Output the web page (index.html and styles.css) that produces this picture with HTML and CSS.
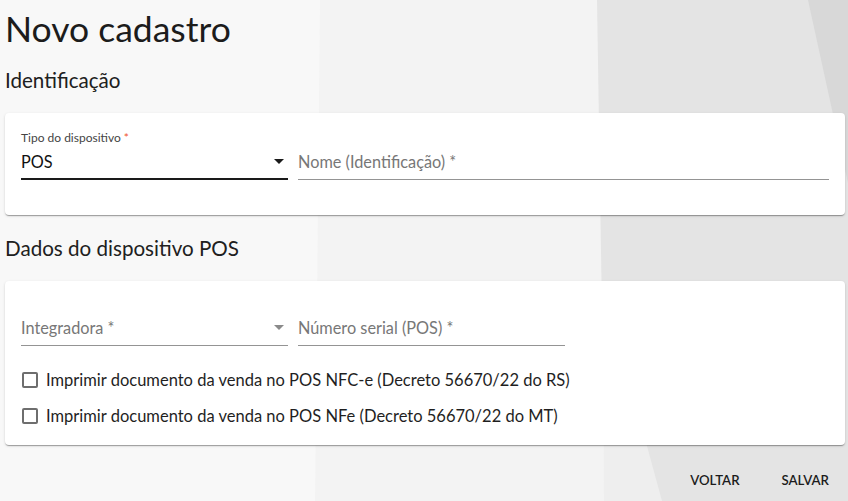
FILE: index.html
```html
<!DOCTYPE html>
<html lang="pt-BR">
<head>
<meta charset="utf-8">
<title>Novo cadastro</title>
<link rel="stylesheet" href="styles.css">
</head>
<body>
<main class="page">
  <h1 class="title">Novo cadastro</h1>

  <h2 class="section">Identificação</h2>
  <section class="card card-ident">
    <div class="row">
      <div class="field field-select">
        <label class="label">Tipo do dispositivo <span class="req">*</span></label>
        <div class="control control-focused">
          <span class="value">POS</span>
          <svg class="arrow" viewBox="0 0 10 5" width="10" height="5"><path d="M0 0h10L5 5z" fill="#1a1a1a"/></svg>
        </div>
      </div>
      <div class="field field-grow">
        <div class="control">
          <span class="placeholder">Nome (Identificação) *</span>
        </div>
      </div>
    </div>
  </section>

  <h2 class="section">Dados do dispositivo POS</h2>
  <section class="card card-pos">
    <div class="row">
      <div class="field field-select">
        <div class="control">
          <span class="placeholder">Integradora *</span>
          <svg class="arrow" viewBox="0 0 10 5" width="10" height="5"><path d="M0 0h10L5 5z" fill="#8a8a8a"/></svg>
        </div>
      </div>
      <div class="field field-select">
        <div class="control">
          <span class="placeholder">Número serial (POS) *</span>
        </div>
      </div>
    </div>
    <label class="check"><span class="box"></span><span>Imprimir documento da venda no POS NFC-e (Decreto 56670/22 do RS)</span></label>
    <label class="check"><span class="box"></span><span>Imprimir documento da venda no POS NFe (Decreto 56670/22 do MT)</span></label>
  </section>

  <div class="actions">
    <button class="btn">VOLTAR</button>
    <button class="btn">SALVAR</button>
  </div>
</main>
</body>
</html>
```

FILE: styles.css
```css
html, body {
  margin: 0;
  padding: 0;
}

body {
  width: 848px;
  height: 501px;
  overflow: hidden;
  font-family: "Lato", "Liberation Sans", sans-serif;
  color: #1f1f1f;
  background-color: #f8f8f8;
  background-image: url("data:image/svg+xml,%3Csvg xmlns='http://www.w3.org/2000/svg' viewBox='0 0 848 501' preserveAspectRatio='none'%3E%3Crect width='848' height='501' fill='%23f8f8f8'/%3E%3Cpolygon points='320,0 848,0 848,501 315,501' fill='%23f3f3f3'/%3E%3Cpolygon points='597,0 848,0 848,501 605,501' fill='%23e4e4e4'/%3E%3Cpolygon points='603,285 662,501 604,501' fill='%23eeeeee'/%3E%3Cpolygon points='808,0 848,0 848,183' fill='%23d8d8d8'/%3E%3C/svg%3E");
  background-size: 848px 501px;
  background-repeat: no-repeat;
}

.page {
  padding: 9px 3px 0 5px;
}

.title {
  margin: 0 0 19px 0;
  font-size: 35.5px;
  line-height: 40px;
  font-weight: 400;
  color: #1c1c1c;
}

.section {
  margin: 0 0 21px 0;
  font-size: 20.6px;
  line-height: 24px;
  font-weight: 400;
  color: #202020;
}

.card {
  background: #ffffff;
  border-radius: 4px;
  box-shadow: 0 2px 1px -1px rgba(0, 0, 0, 0.2), 0 1px 1px 0 rgba(0, 0, 0, 0.14), 0 1px 3px 0 rgba(0, 0, 0, 0.12);
  padding: 0 16px;
}

.card-ident {
  padding-top: 19px;
  padding-bottom: 35px;
  margin-bottom: 21px;
}

.card-pos {
  padding-top: 29px;
  padding-bottom: 11px;
}

.row {
  display: flex;
  align-items: flex-end;
  gap: 10px;
}

.field {
  display: flex;
  flex-direction: column;
}

.field-select {
  width: 267px;
}

.field-grow {
  flex: 1;
}

.label {
  font-size: 12px;
  line-height: 12px;
  color: #444444;
}

.req {
  color: #f0532c;
}

.control {
  height: 35px;
  display: flex;
  align-items: center;
  justify-content: space-between;
  border-bottom: 1px solid #949494;
  font-size: 16.3px;
}

.control-focused {
  height: 34px;
  border-bottom: 2px solid #1a1a1a;
}

.value {
  color: #111111;
}

.placeholder {
  color: #777777;
}

.arrow {
  margin-right: 4px;
}

.check {
  display: flex;
  align-items: center;
  height: 36px;
  font-size: 16.5px;
  color: #1f1f1f;
}

.card-pos .row {
  margin-bottom: 16px;
}

.box {
  width: 12px;
  height: 12px;
  border: 2px solid #6e6e6e;
  border-radius: 2px;
  margin: 0 8px 0 1px;
  flex: none;
}

.actions {
  display: flex;
  justify-content: flex-end;
  gap: 26px;
  padding-right: 8px;
  margin-top: 17px;
}

.btn {
  font-family: "Lato", "Liberation Sans", sans-serif;
  font-size: 13.2px;
  font-weight: 600;
  line-height: 24px;
  padding: 6px 8px;
  border: none;
  background: transparent;
  color: #1c1c1c;
  letter-spacing: 0;
}
```
